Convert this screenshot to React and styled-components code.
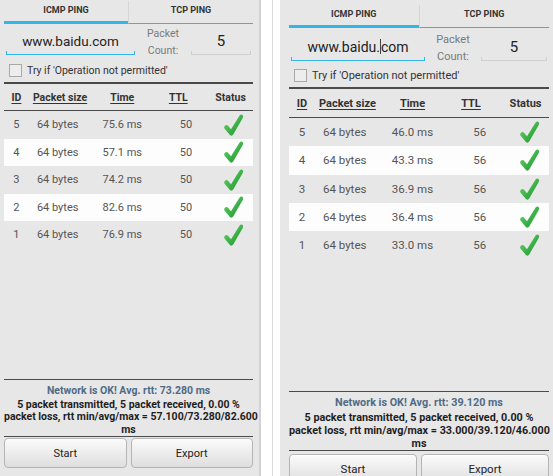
import React from 'react';
import styled, { createGlobalStyle } from 'styled-components';

const GlobalStyle = createGlobalStyle`
  html, body {
    margin: 0;
    padding: 0;
    background: #fff;
  }
  body {
    font-family: Roboto, "Noto Sans", sans-serif;
    width: 553px;
    height: 476px;
    overflow: hidden;
  }
`;

const BLUE = '#33b5e5';

const Page = styled.div`
  display: flex;
  width: 553px;
  height: 476px;
  background: #fff;
`;

const Gap = styled.div`
  width: 11px;
  margin-right: 7px;
  border-right: 1px solid #dadada;
  flex-shrink: 0;
`;

const Panel = styled.div`
  width: ${({ $w }) => $w}px;
  height: 476px;
  box-sizing: border-box;
  padding: ${({ $top }) => $top}px ${({ $pr }) => $pr}px 0 ${({ $pl }) => $pl}px;
  background: #e8e7e7;
  border-right: ${({ $edge }) => ($edge ? '2px solid #d2d2d2' : 'none')};
  display: flex;
  flex-direction: column;
  overflow: hidden;
  flex-shrink: 0;
`;

const TabBar = styled.div`
  display: flex;
  align-items: flex-end;
  height: 24px;
  flex-shrink: 0;
`;

const Tab = styled.div`
  flex: 1;
  height: ${({ $active }) => ($active ? 21 : 23)}px;
  border-bottom: ${({ $active }) => ($active ? 3 : 1)}px solid ${BLUE};
  display: flex;
  align-items: center;
  justify-content: center;
  font-size: 9px;
  font-weight: 700;
  color: #333;
  padding-bottom: 4px;
  box-sizing: border-box;

  & + & {
    border-left: 1px solid #d6d6d6;
  }
`;

const FormRow = styled.div`
  display: flex;
  align-items: flex-end;
  height: ${({ $h }) => $h}px;
  padding-left: 2px;
  padding-bottom: 3px;
  box-sizing: border-box;
  flex-shrink: 0;
`;

const UrlField = styled.div`
  width: ${({ $w }) => $w}px;
  display: flex;
  flex-direction: column;
  align-items: center;
`;

const UrlText = styled.div`
  font-size: ${({ $fs }) => $fs}px;
  line-height: 20px;
  color: #222;
`;

const Caret = styled.span`
  display: inline-block;
  width: 1px;
  height: 15px;
  background: #444;
  vertical-align: -2px;
`;

const Underline = styled.div`
  align-self: stretch;
  height: 3px;
  border: 1px solid ${({ $c }) => $c};
  border-top: none;
  border-bottom-width: ${({ $b }) => $b}px;
`;

const CountLabel = styled.div`
  width: 40px;
  margin-left: 8px;
  margin-bottom: -4px;
  font-size: ${({ $fs }) => $fs}px;
  line-height: 16.5px;
  color: #7a7a7a;
  text-align: center;
`;

const CountField = styled.div`
  flex: 1;
  margin-left: 8px;
  margin-right: 2px;
  display: flex;
  flex-direction: column;
  align-items: center;
`;

const CountText = styled.div`
  font-size: 15px;
  line-height: 20px;
  color: #222;
`;

const CheckRow = styled.div`
  display: flex;
  align-items: center;
  height: ${({ $h }) => $h}px;
  padding-left: 5px;
  flex-shrink: 0;
`;

const Box = styled.div`
  width: 11px;
  height: 11px;
  border: 1px solid #a8a8a8;
  background: #ededed;
  margin-right: 5px;
`;

const CheckLabel = styled.div`
  font-size: ${({ $fs }) => $fs}px;
  color: #333;
`;

const Rule = styled.div`
  height: ${({ $t }) => $t || 1}px;
  background: #4a4a4a;
  flex-shrink: 0;
`;

const Grid = styled.div`
  display: grid;
  grid-template-columns: 10% 27% 21% 24% 18%;
  align-items: center;
  height: ${({ $h }) => $h}px;
  flex-shrink: 0;
  background: ${({ $alt }) => ($alt ? '#fdfdfd' : 'transparent')};
`;

const HeadCell = styled.div`
  font-size: ${({ $fs }) => $fs}px;
  font-weight: 700;
  color: #333;
  text-align: ${({ $align }) => $align || 'center'};
  padding-left: ${({ $pl }) => $pl || 0}px;
  text-decoration: ${({ $plain }) => ($plain ? 'none' : 'underline')};
  text-underline-offset: 2px;
`;

const Cell = styled.div`
  font-size: ${({ $fs }) => $fs}px;
  color: #555;
  padding-left: ${({ $pl }) => $pl || 0}px;
  padding-right: ${({ $pr }) => $pr || 0}px;
  display: flex;
  justify-content: ${({ $align }) =>
    $align === 'right' ? 'flex-end' : $align === 'left' ? 'flex-start' : 'center'};
`;

const Spacer = styled.div`
  height: ${({ $h }) => $h}px;
  flex-shrink: 0;
`;

const Footer = styled.div`
  display: flex;
  flex-direction: column;
  flex-shrink: 0;
`;

const Status = styled.div`
  text-align: center;
  font-size: ${({ $fs }) => $fs}px;
  font-weight: 700;
  color: #4e6b86;
  margin-top: 4px;
  line-height: 14px;
`;

const Stats = styled.div`
  text-align: center;
  font-size: ${({ $fs }) => $fs}px;
  font-weight: 700;
  color: #1e1e1e;
  line-height: ${({ $lh }) => $lh}px;
  white-space: nowrap;
  margin-top: 1px;
`;

const Buttons = styled.div`
  display: flex;
  gap: 4px;
  margin-top: ${({ $mt }) => $mt}px;
  height: 30px;
  flex-shrink: 0;
`;

const Button = styled.div`
  flex: 1;
  display: flex;
  align-items: center;
  justify-content: center;
  border: 1px solid #b4b4b4;
  border-radius: 4px;
  background: linear-gradient(#fbfbfb, #dedede);
  box-shadow: inset 0 1px 0 #fff;
  font-size: ${({ $fs }) => $fs}px;
  color: #222;
`;

const Check = () => (
  <svg width="22" height="24" viewBox="0 0 22 24">
    <defs>
      <linearGradient id="chk" x1="0" y1="0" x2="1" y2="1">
        <stop offset="0" stopColor="#7ad86e" />
        <stop offset="0.5" stopColor="#3fb54a" />
        <stop offset="1" stopColor="#228a33" />
      </linearGradient>
    </defs>
    <path
      d="M2.5 13.2 Q4 11.4 5.6 12.3 L9 16.2 L17.6 2.4 Q19.4 0.6 20.8 2.2 Q21.6 3.6 20.6 5.2 L11.2 21.6 Q9.6 23.6 7.9 21.9 L2.6 15.8 Q1.6 14.4 2.5 13.2 Z"
      fill="url(#chk)"
    />
  </svg>
);

function Screen({ layout, rows, avg, range, cursor }) {
  const url = 'www.baidu.com';
  const f = layout.font;
  return (
    <Panel $w={layout.w} $top={layout.top} $pl={layout.pl} $pr={layout.pr} $edge={layout.edge}>
      <TabBar>
        <Tab $active>ICMP PING</Tab>
        <Tab>TCP PING</Tab>
      </TabBar>

      <FormRow $h={layout.formH}>
        <UrlField $w={layout.urlW}>
          <UrlText $fs={f.url}>
            {cursor ? (
              <>
                {url.slice(0, cursor)}
                <Caret />
                {url.slice(cursor)}
              </>
            ) : (
              url
            )}
          </UrlText>
          <Underline $c={BLUE} $b={1.5} />
        </UrlField>
        <CountLabel $fs={f.small}>
          Packet
          <br />
          Count:
        </CountLabel>
        <CountField>
          <CountText>5</CountText>
          <Underline $c="#cfcfcf" $b={1} />
        </CountField>
      </FormRow>

      <CheckRow $h={layout.checkH}>
        <Box />
        <CheckLabel $fs={f.body}>Try if 'Operation not permitted'</CheckLabel>
      </CheckRow>

      <Rule $t={2} />
      <Grid $h={layout.headH}>
        <HeadCell $fs={f.head}>ID</HeadCell>
        <HeadCell $fs={f.head} $align="left" $pl={4}>Packet size</HeadCell>
        <HeadCell $fs={f.head}>Time</HeadCell>
        <HeadCell $fs={f.head}>TTL</HeadCell>
        <HeadCell $fs={f.head} $plain>Status</HeadCell>
      </Grid>
      <Rule />

      {rows.map((r, i) => (
        <Grid key={r.id} $h={layout.rowH} $alt={i % 2 === 1}>
          <Cell $fs={f.cell}>{r.id}</Cell>
          <Cell $fs={f.cell} $align="left" $pl={8}>64 bytes</Cell>
          <Cell $fs={f.cell}>{r.time} ms</Cell>
          <Cell $fs={f.cell} $align="right" $pr={16}>{r.ttl}</Cell>
          <Cell $align="right" $pr={9}>
            <Check />
          </Cell>
        </Grid>
      ))}

      <Spacer $h={layout.gap} />

      <Footer>
        <Rule />
        <Status $fs={f.foot}>Network is OK! Avg. rtt: {avg} ms</Status>
        <Stats $fs={f.foot} $lh={layout.lh}>
          5 packet transmitted, 5 packet received, 0.00 %
          <br />
          packet loss, rtt min/avg/max = {range}
          <br />
          ms
        </Stats>
        <Rule />
        <Buttons $mt={layout.btnTop}>
          <Button $fs={f.cell}>Start</Button>
          <Button $fs={f.cell}>Export</Button>
        </Buttons>
      </Footer>
    </Panel>
  );
}

const leftRows = [
  { id: 5, time: '75.6', ttl: 50 },
  { id: 4, time: '57.1', ttl: 50 },
  { id: 3, time: '74.2', ttl: 50 },
  { id: 2, time: '82.6', ttl: 50 },
  { id: 1, time: '76.9', ttl: 50 },
];

const rightRows = [
  { id: 5, time: '46.0', ttl: 56 },
  { id: 4, time: '43.3', ttl: 56 },
  { id: 3, time: '36.9', ttl: 56 },
  { id: 2, time: '36.4', ttl: 56 },
  { id: 1, time: '33.0', ttl: 56 },
];

const leftLayout = {
  w: 261, top: 0, pl: 4, pr: 6, edge: true, urlW: 129,
  formH: 34, checkH: 24, headH: 26, rowH: 27.5, gap: 130, lh: 12.5, btnTop: 1,
  font: { url: 13.5, small: 10.5, body: 10.5, head: 10.5, cell: 11, foot: 10.5 },
};

const rightLayout = {
  w: 273, top: 4, pl: 9, pr: 4, edge: false, urlW: 134,
  formH: 36, checkH: 23, headH: 28, rowH: 28.3, gap: 132, lh: 13, btnTop: 3,
  font: { url: 14, small: 11, body: 11, head: 11, cell: 11.5, foot: 10.8 },
};

export default function App() {
  return (
    <>
      <GlobalStyle />
      <Page>
        <Screen
          layout={leftLayout}
          rows={leftRows}
          avg="73.280"
          range="57.100/73.280/82.600"
        />
        <Gap />
        <Screen
          layout={rightLayout}
          rows={rightRows}
          avg="39.120"
          range="33.000/39.120/46.000"
          cursor={10}
        />
      </Page>
    </>
  );
}
